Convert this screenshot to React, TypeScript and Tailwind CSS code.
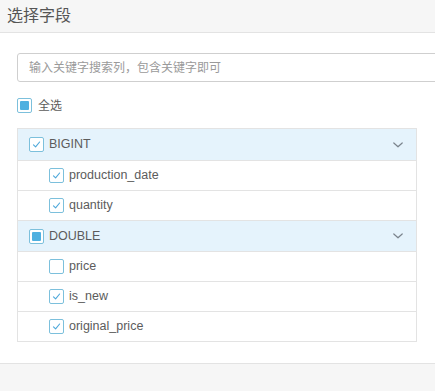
import React from "react";

type Check = "on" | "off" | "some";

function Box({ state }: { state: Check }) {
  return (
    <span className="w-[15px] h-[15px] border border-[#7cc0dc] rounded-[2px] bg-white flex items-center justify-center shrink-0">
      {state === "on" && (
        <svg width="11" height="11" viewBox="0 0 11 11" fill="none">
          <path d="M2.5 5.8 L4.6 7.9 L8.6 3" stroke="#4da8da" strokeWidth="1.1" strokeLinecap="round" strokeLinejoin="round" />
        </svg>
      )}
      {state === "some" && <span className="w-[9px] h-[9px] rounded-[1px] bg-[#4fb0e0]" />}
    </span>
  );
}

const groups: { name: string; state: Check; fields: { name: string; on: boolean }[] }[] = [
  {
    name: "BIGINT",
    state: "on",
    fields: [
      { name: "production_date", on: true },
      { name: "quantity", on: true },
    ],
  },
  {
    name: "DOUBLE",
    state: "some",
    fields: [
      { name: "price", on: false },
      { name: "is_new", on: true },
      { name: "original_price", on: true },
    ],
  },
];

export default function App() {
  return (
    <div
      className="w-[435px] h-[391px] overflow-hidden flex flex-col text-[#5c5c5c] bg-white"
      style={{ fontFamily: '"Liberation Sans", "Noto Sans CJK SC", sans-serif' }}
    >
      <div className="h-[33px] shrink-0 bg-[#f6f6f6] border-b border-[#e3e3e3] pl-[7px] flex items-center text-[16px] text-[#555]">
        选择字段
      </div>

      <div className="flex-1 pl-[17px] pt-[20px] overflow-hidden">
        <div className="w-[440px] h-[29px] border border-[#cfcfcf] rounded-[3px] flex items-center pl-[11px] text-[12px] text-[#9a9a9a]">
          输入关键字搜索列，包含关键字即可
        </div>

        <div className="mt-[16px] flex items-center gap-[6px] text-[12px] h-[15px]">
          <Box state="some" />
          <span>全选</span>
        </div>

        <div className="mt-[15px] w-[400px] border border-[#e3e3e3] text-[12px]">
          {groups.map((g, gi) => (
            <div key={g.name}>
              <div
                className={
                  "h-[31px] bg-[#e5f3fc] flex items-center pl-[11px] pr-[12px] " +
                  (gi > 0 ? "border-t border-[#e3e3e3]" : "")
                }
              >
                <Box state={g.state} />
                <span className="ml-[5px] text-[12.5px]">{g.name}</span>
                <svg className="ml-auto" width="12" height="8" viewBox="0 0 12 8" fill="none">
                  <path d="M1.8 2 L6 5.8 L10.2 2" stroke="#7a838c" strokeWidth="1.2" strokeLinecap="round" strokeLinejoin="round" />
                </svg>
              </div>
              {g.fields.map((f) => (
                <div key={f.name} className="h-[30px] border-t border-[#e3e3e3] flex items-center pl-[31px]">
                  <Box state={f.on ? "on" : "off"} />
                  <span className="ml-[5px] text-[12.5px]">{f.name}</span>
                </div>
              ))}
            </div>
          ))}
        </div>
      </div>

      <div className="h-[28px] shrink-0 bg-[#f6f6f6] border-t border-[#e3e3e3]" />
    </div>
  );
}
